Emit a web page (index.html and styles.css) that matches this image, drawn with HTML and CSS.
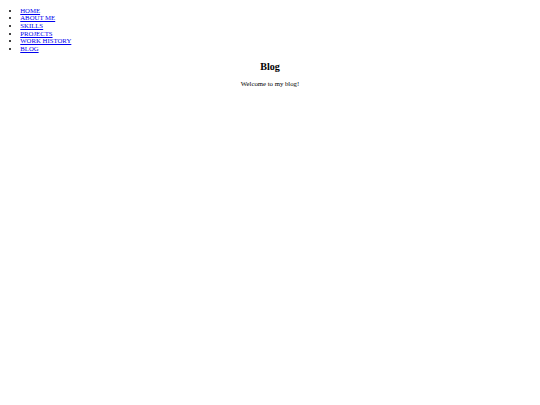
FILE: index.html
```html
<!DOCTYPE html>
<html>
<head>
<meta charset="utf-8">
<title>Blog</title>
<link rel="stylesheet" href="styles.css">
</head>
<body class="page">
<nav class="nav">
<ul class="nav-list">
<li><a href="#">HOME</a></li>
<li><a href="#">ABOUT ME</a></li>
<li><a href="#">SKILLS</a></li>
<li><a href="#">PROJECTS</a></li>
<li><a href="#">WORK HISTORY</a></li>
<li><a href="#">BLOG</a></li>
</ul>
</nav>
<main class="content">
<h2 class="title">Blog</h2>
<p class="intro">Welcome to my blog!</p>
</main>
</body>
</html>
```
FILE: styles.css
```css
html {
  background: #fff;
}
.page {
  margin: 3.375px;
  font-family: "Liberation Serif", "Times New Roman", serif;
  font-size: 6.75px;
  color: #000;
}
.nav-list {
  margin: 3.375px 0 6.75px;
  padding-left: 16.875px;
  line-height: 7.6px;
}
.nav-list a {
  color: #0000ee;
}
.content {
  text-align: center;
}
.title {
  font-size: 10.125px;
  margin: 8.4px 0;
}
.intro {
  margin: 6.75px 0;
}
```
